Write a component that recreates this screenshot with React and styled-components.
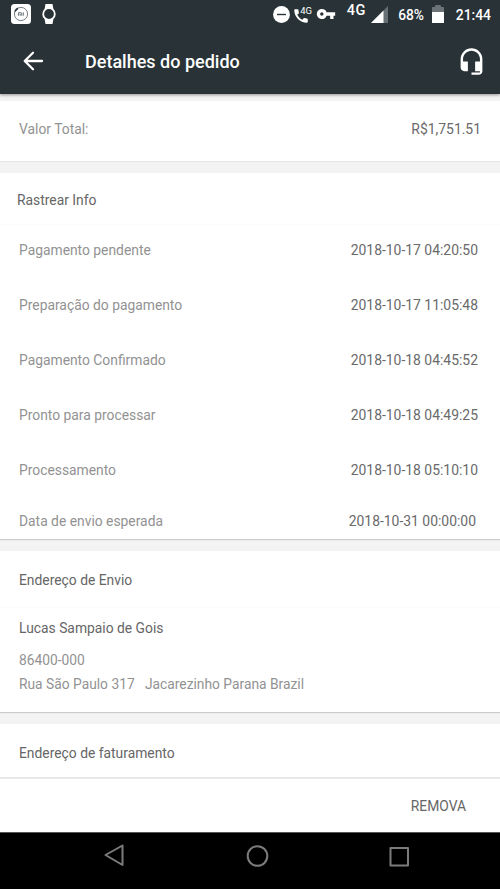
import React from "react";
import styled, { createGlobalStyle } from "styled-components";
import { MdCall, MdHeadsetMic, MdVpnKey } from "react-icons/md";

const GlobalStyle = createGlobalStyle`
  * {
    box-sizing: border-box;
  }

  body {
    margin: 0;
    background-color: #f3f3f3;
    font-family: Roboto, sans-serif;
  }
`;

const Screen = styled.div`
  display: flex;
  flex-direction: column;
  width: 500px;
  height: 889px;
  overflow: hidden;
  background-color: #f3f3f3;
  font-size: 13.85px;
  line-height: 20px;
  color: #666;

  svg {
    display: block;
    flex: none;
  }
`;

const Header = styled.header`
  flex: none;
  height: 94px;
  background-color: #283237;
  color: #fff;
  box-shadow: 0 1px 3px rgba(0, 0, 0, 0.4);
`;

const StatusBar = styled.div`
  display: flex;
  align-items: center;
  height: 28px;
  padding: 0 9px 0 11px;
`;

const StatusItem = styled.div`
  display: flex;
  flex: none;
  width: ${props => props.$width}px;
  margin-left: ${props => props.$gap || 0}px;
`;

const StatusText = styled(StatusItem)`
  justify-content: flex-end;
  padding-top: ${props => (props.$raised ? 0 : 2)}px;
  padding-bottom: ${props => (props.$raised ? 7 : 0)}px;
  font-size: ${props => props.$size}px;
  font-weight: 500;
  letter-spacing: ${props => props.$spacing || 0}px;
  white-space: nowrap;
`;

const StatusSpacer = styled.div`
  flex: 1;
`;

const CallItem = styled(StatusItem)`
  position: relative;
  padding-top: 4px;
`;

const CallBadge = styled.span`
  position: absolute;
  top: 3px;
  right: 0;
  font-size: 9.5px;
  line-height: 10px;
`;

const Toolbar = styled.div`
  display: flex;
  align-items: center;
  height: 66px;
  padding: 0 14px 0 23px;
`;

const Title = styled.h1`
  flex: 1;
  margin: 2px 0 0 41px;
  font-size: 18px;
  font-weight: 500;
  line-height: 24px;
`;

const Content = styled.main`
  display: flex;
  flex: 1;
  flex-direction: column;
  gap: 12px;
  padding-top: 7px;
`;

const Card = styled.section`
  flex: none;
  height: ${props => props.$height}px;
  background-color: #fff;
  box-shadow: 0 1px 1px ${props => (props.$soft ? "#e6e6e6" : "#cbcbcb")};
`;

const CardTitle = styled.h2`
  display: flex;
  align-items: center;
  height: ${props => props.$height}px;
  margin: 0;
  padding: 2px 19px 0 ${props => props.$indent || 19}px;
  border-bottom: 1px solid #fcfcfc;
  font-size: inherit;
  font-weight: 400;
`;

const Row = styled.div`
  display: flex;
  align-items: center;
  justify-content: space-between;
  height: ${props => props.$height || 55}px;
  padding: 0 ${props => props.$right || 22}px 0 19px;
`;

const TrackingRow = styled(Row)`
  padding-bottom: ${props => (props.$height ? 4 : 6)}px;
`;

const Label = styled.span`
  color: #929292;
`;

const Value = styled.span`
  font-size: 13.92px;
  color: #6a6a6a;
`;

const Address = styled.div`
  padding: 10px 19px 0;
`;

const Recipient = styled.div`
  margin-bottom: 12px;
`;

const AddressLine = styled.div`
  height: 24px;
  font-size: 13.8px;
  color: #929292;
  white-space: pre;
`;

const Footer = styled.footer`
  display: flex;
  flex: none;
  align-items: center;
  justify-content: flex-end;
  height: 55px;
  padding: 0 34px 0 0;
  border-top: 2px solid #e8e8e8;
  background-color: #fff;
`;

const NavBar = styled.nav`
  display: flex;
  flex: none;
  height: 57px;
  padding: 11px 0 0 104px;
  border-top: 1px solid #555;
  background-color: #000;
`;

const NavItem = styled.div`
  width: ${props => props.$width}px;
`;

const AppIcon = () => (
  <svg width="20" height="20" viewBox="0 0 20 20">
    <rect width="20" height="20" rx="3.5" fill="#fff" />
    <circle cx="10" cy="10" r="6.6" fill="none" stroke="#536067" strokeWidth=".8" />
    <path d="M4 7.5A6.6 6.6 0 0 1 7 4.3" fill="none" stroke="#263238" strokeWidth="1.7" />
    <path
      d="M7.6 11.7V8.7h2.3q.8 0 .8.8v2.2M9.2 9.9v1.8M12.3 8.4v3.3"
      fill="none"
      stroke="#536067"
      strokeWidth=".9"
    />
  </svg>
);

const WatchIcon = () => (
  <svg width="14" height="20" viewBox="0 0 14 20">
    <path d="M3.5 0h7l.9 5h-8.8zM2.6 15h8.8l-.9 5h-7z" fill="#fff" />
    <circle cx="7" cy="10" r="5.8" fill="#283237" stroke="#fff" strokeWidth="1.8" />
  </svg>
);

const SilentIcon = () => (
  <svg width="17" height="17" viewBox="0 0 17 17">
    <circle cx="8.5" cy="8.5" r="8.4" fill="#fff" />
    <path d="M4 8.5h9" stroke="#283237" strokeWidth="1.4" />
  </svg>
);

const SignalIcon = () => (
  <svg width="17" height="17" viewBox="0 0 17 17">
    <path d="M0 17 17 0v17z" fill="#667075" />
    <path d="M0 17 12.5 4.5V17z" fill="#fff" />
  </svg>
);

const BatteryIcon = () => (
  <svg width="12" height="18" viewBox="0 0 12 18">
    <path d="M0 2.5Q0 2 .5 2H3V1q0-1 1-1h4q1 0 1 1v1h2.5q.5 0 .5.5V8H0z" fill="#6b7377" />
    <path d="M0 7h12v11H0z" fill="#fff" />
  </svg>
);

const BackIcon = () => (
  <svg width="21" height="20" viewBox="0 0 21 20">
    <path
      d="M19 10H2.5M10 1.7 1.7 10l8.3 8.3"
      fill="none"
      stroke="#fff"
      strokeWidth="2.3"
      strokeLinecap="round"
      strokeLinejoin="round"
    />
  </svg>
);

const NavShape = ({ children }) => (
  <svg
    width="24"
    height="26"
    viewBox="0 0 24 26"
    fill="none"
    stroke="#7c7c7c"
    strokeWidth="2"
    strokeLinejoin="round"
  >
    {children}
  </svg>
);

const tracking = [
  { label: "Pagamento pendente", date: "2018-10-17 04:20:50" },
  { label: "Preparação do pagamento", date: "2018-10-17 11:05:48" },
  { label: "Pagamento Confirmado", date: "2018-10-18 04:45:52" },
  { label: "Pronto para processar", date: "2018-10-18 04:49:25" },
  { label: "Processamento", date: "2018-10-18 05:10:10" },
  { label: "Data de envio esperada", date: "2018-10-31 00:00:00", height: 46, right: 24 }
];

const App = () => (
  <>
    <GlobalStyle />
    <Screen>
      <Header>
        <StatusBar>
          <StatusItem $width={20}>
            <AppIcon />
          </StatusItem>
          <StatusItem $width={14} $gap={11}>
            <WatchIcon />
          </StatusItem>
          <StatusSpacer />
          <StatusItem $width={17}>
            <SilentIcon />
          </StatusItem>
          <CallItem $width={20} $gap={2}>
            <MdCall size={18} />
            <CallBadge>4G</CallBadge>
          </CallItem>
          <StatusItem $width={20} $gap={4}>
            <MdVpnKey size={20} />
          </StatusItem>
          <StatusText $width={20} $gap={10} $size={14.5} $raised $spacing={0.6}>
            4G
          </StatusText>
          <StatusItem $width={17} $gap={5}>
            <SignalIcon />
          </StatusItem>
          <StatusText $width={26} $gap={10} $size={13.8}>
            68%
          </StatusText>
          <StatusItem $width={12} $gap={8}>
            <BatteryIcon />
          </StatusItem>
          <StatusText $width={36} $gap={11} $size={13.9}>
            21:44
          </StatusText>
        </StatusBar>
        <Toolbar>
          <BackIcon />
          <Title>Detalhes do pedido</Title>
          <MdHeadsetMic size={29} />
        </Toolbar>
      </Header>

      <Content>
        <Card $height={60} $soft>
          <Row $right={19}>
            <Label>Valor Total:</Label>
            <Value>R$1,751.51</Value>
          </Row>
        </Card>

        <Card $height={366}>
          <CardTitle $height={52} $indent={17}>
            Rastrear Info
          </CardTitle>
          {tracking.map(({ label, date, height, right }) => (
            <TrackingRow key={label} $height={height} $right={right}>
              <Label>{label}</Label>
              <Value>{date}</Value>
            </TrackingRow>
          ))}
        </Card>

        <Card $height={161}>
          <CardTitle $height={57}>Endereço de Envio</CardTitle>
          <Address>
            <Recipient>Lucas Sampaio de Gois</Recipient>
            <AddressLine>86400-000</AddressLine>
            <AddressLine>{"Rua São Paulo 317   Jacarezinho Parana Brazil"}</AddressLine>
          </Address>
        </Card>

        <Card $height={53}>
          <CardTitle $height={57}>Endereço de faturamento</CardTitle>
        </Card>
      </Content>

      <Footer>REMOVA</Footer>

      <NavBar>
        <NavItem $width={142}>
          <NavShape>
            <path d="M18.5 1.5v19.5L1.5 11z" />
          </NavShape>
        </NavItem>
        <NavItem $width={142}>
          <NavShape>
            <circle cx="11.5" cy="12" r="9.8" />
          </NavShape>
        </NavItem>
        <NavItem $width={24}>
          <NavShape>
            <path d="M2.5 4H20v17.5H2.5z" />
          </NavShape>
        </NavItem>
      </NavBar>
    </Screen>
  </>
);

export default App;
